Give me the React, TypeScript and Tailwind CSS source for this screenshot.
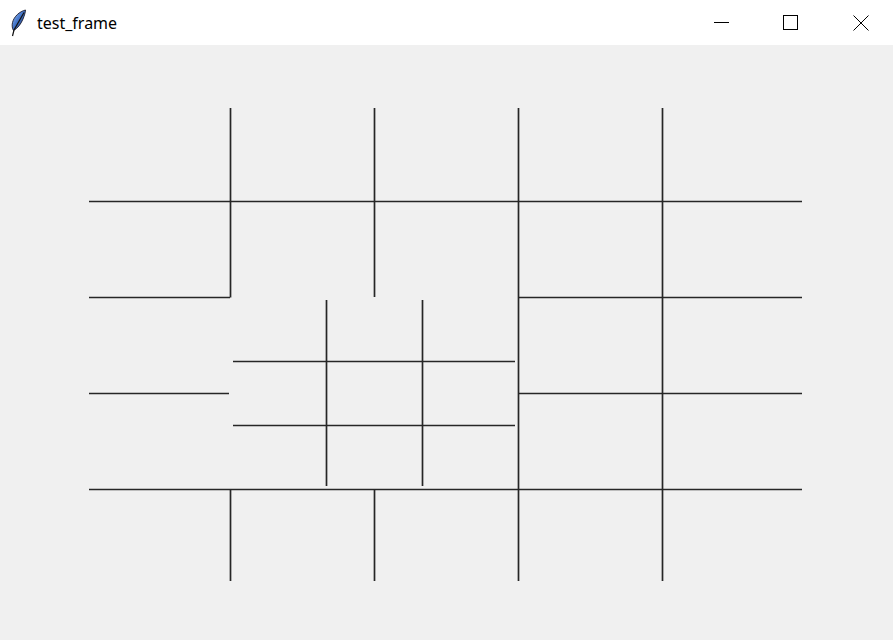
import React from 'react';

// canvas segments, in page coordinates: [x1, y1, x2, y2]
const lines: [number, number, number, number][] = [
  // horizontals
  [89, 201.5, 802, 201.5],
  [89, 297.5, 230, 297.5],
  [519, 297.5, 802, 297.5],
  [89, 393.5, 229, 393.5],
  [519, 393.5, 802, 393.5],
  [233, 361.5, 515, 361.5],
  [233, 425.5, 515, 425.5],
  [89, 489.5, 802, 489.5],
  // verticals
  [230.5, 108, 230.5, 297.5],
  [374.5, 108, 374.5, 297],
  [230.5, 489.5, 230.5, 581],
  [374.5, 489.5, 374.5, 581],
  [518.5, 108, 518.5, 581],
  [662.5, 108, 662.5, 581],
  [326.5, 300, 326.5, 486],
  [422.5, 300, 422.5, 486],
];

const Feather = () => (
  <svg width="18" height="28" viewBox="0 0 18 28" className="block">
    <defs>
      <linearGradient id="fg" x1="0" y1="0" x2="1" y2="1">
        <stop offset="0" stopColor="#a8c8f4" />
        <stop offset="0.45" stopColor="#4577cc" />
        <stop offset="1" stopColor="#1b2f5e" />
      </linearGradient>
    </defs>
    <path
      d="M16.5 1 C10.5 2.5 5 7.5 3.5 13.5 C2.8 16.5 3.2 19.5 4.5 21.5 C8.5 19.5 12 15 14 10 C15.5 6.5 16.3 3.5 16.5 1 Z"
      fill="url(#fg)"
      stroke="#1a1a2a"
      strokeWidth="0.9"
    />
    <path d="M15 3.5 L5 21 L3.5 27" stroke="#111" strokeWidth="1.2" fill="none" />
  </svg>
);

export default function App() {
  return (
    <div className="w-[893px] h-[640px] flex flex-col bg-[#f0f0f0] overflow-hidden">
      <div className="h-[45px] bg-white flex items-center shrink-0">
        <div className="pl-[9px] pr-[10px] pt-[1px]">
          <Feather />
        </div>
        <span className="text-[16px] text-black font-['Noto_Sans',sans-serif] leading-none pt-[1px]">
          test_frame
        </span>
        <div className="ml-auto flex h-full">
          <div className="w-[60px] flex items-center justify-center">
            <div className="w-[15px] h-px bg-black" />
          </div>
          <div className="w-[78px] flex items-center justify-center">
            <div className="w-[15px] h-[15px] border border-black" />
          </div>
          <div className="w-[64px] flex items-center justify-center">
            <svg width="16" height="16" viewBox="0 0 16 16">
              <path d="M0.5 0.5 L15.5 15.5 M15.5 0.5 L0.5 15.5" stroke="#000" strokeWidth="1" />
            </svg>
          </div>
        </div>
      </div>
      <div className="flex-1 relative">
        <svg width="893" height="595" viewBox="0 45 893 595" className="block">
          {lines.map(([x1, y1, x2, y2], i) => (
            <line
              key={i}
              x1={x1}
              y1={y1}
              x2={x2}
              y2={y2}
              stroke="#262626"
              strokeWidth="1.7"
            />
          ))}
        </svg>
      </div>
    </div>
  );
}
